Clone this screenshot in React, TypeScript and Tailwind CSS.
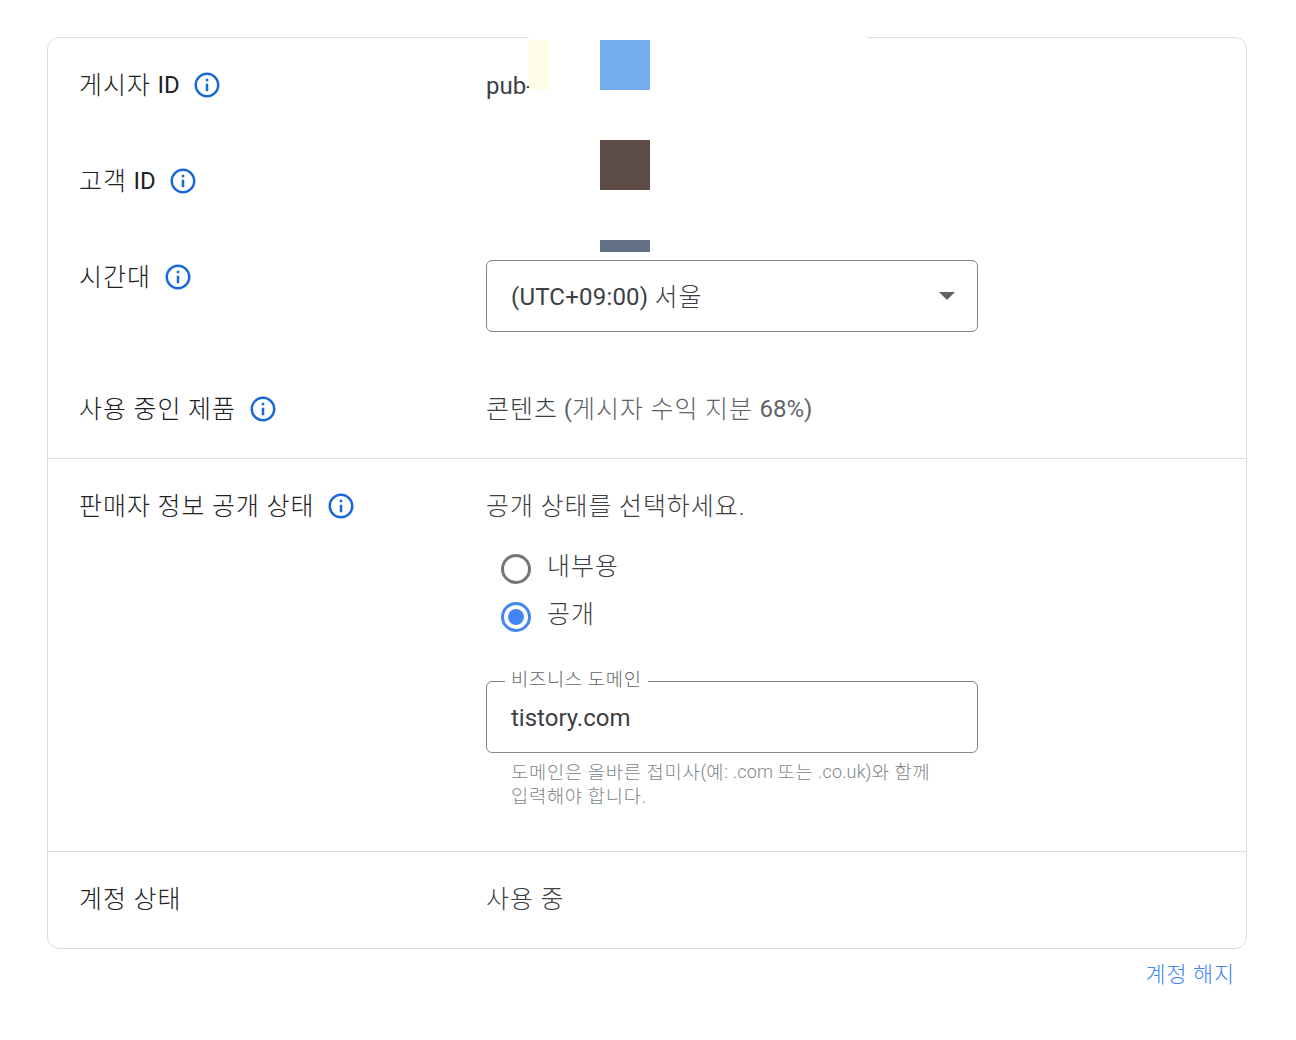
import React from 'react';

const FONT = "font-['Roboto','Noto_Sans_CJK_KR',sans-serif]";

// hangul in the original is larger and wider than Noto, and sits a touch lower
function Ko({ children }: { children: React.ReactNode }) {
  return <span className="text-[1.04em] tracking-[0.04em] [word-spacing:-0.02em] align-[-1px] font-light">{children}</span>;
}

function InfoIcon() {
  return (
    <svg viewBox="0 0 24 24" className="w-[30px] h-[30px] shrink-0 fill-[#1a68d8]">
      <path d="M11 7h2v2h-2zm0 4h2v6h-2zm1-9C6.48 2 2 6.48 2 12s4.48 10 10 10 10-4.48 10-10S17.52 2 12 2zm0 18c-4.41 0-8-3.59-8-8s3.59-8 8-8 8 3.59 8 8-3.59 8-8 8z" />
    </svg>
  );
}

function Label({ text, latin, info = true }: { text: string; latin?: string; info?: boolean }) {
  return (
    <div className="flex items-center gap-3 h-[30px] text-[24px] leading-[30px] text-[#202124]">
      <span><Ko>{text}</Ko>{latin}</span>
      {info && <InfoIcon />}
    </div>
  );
}

function Radio({ label, checked }: { label: string; checked?: boolean }) {
  return (
    <div className="flex items-start h-12 pl-[15px]">
      <span
        className={`mt-[3px] w-[30px] h-[30px] rounded-full border-[3px] flex items-center justify-center ${checked ? 'border-[#4285f4]' : 'border-[#757575]'}`}
      >
        {checked && <span className="w-[16px] h-[16px] rounded-full bg-[#4285f4]" />}
      </span>
      <span className="ml-4 h-[30px] text-[24px] leading-[30px] text-[#3c4043]"><Ko>{label}</Ko></span>
    </div>
  );
}

export default function App() {
  return (
    <div className={`relative min-h-[1040px] bg-white pt-[37px] pl-[47px] ${FONT}`}>
      <div className="w-[1200px] border border-[#dadce0] rounded-[12px]">
        <div className="grid grid-cols-[407px_1fr] content-start pl-[31px] pt-[32px] h-[420px]">
          <div className="h-[96px]"><Label text="게시자 " latin="ID" /></div>
          <div className="h-[96px] text-[24px] leading-[32px] text-[#3c4043]">pub-</div>
          <div className="h-[96px]"><Label text="고객 " latin="ID" /></div>
          <div className="h-[96px]" />
          <div className="h-[132px]"><Label text="시간대" /></div>
          <div className="h-[130px] -mt-[2px]">
            <div className="w-[492px] h-[72px] border border-[#80868b] rounded-[6px] flex items-center justify-between pl-6 pr-[22px] text-[24px] text-[#3c4043]">
              <span className="pt-[4px] tracking-[0.2px]">(UTC+09:00) <Ko>서울</Ko></span>
              <span className="w-0 h-0 border-x-[8px] border-x-transparent border-t-[8px] border-t-[#5f6368]" />
            </div>
          </div>
          <div><Label text="사용 중인 제품" /></div>
          <div className="h-[30px] text-[24px] leading-[30px] text-[#5f6368]">
            <span className="text-[#3c4043]"><Ko>콘텐츠</Ko></span> (<Ko>게시자 수익 지분 </Ko>68%)
          </div>
        </div>

        <div className="grid grid-cols-[407px_1fr] pl-[31px] pt-[32px] h-[393px] border-t border-[#dadce0]">
          <div><Label text="판매자 정보 공개 상태" /></div>
          <div>
            <div className="h-[30px] text-[24px] leading-[30px] text-[#3c4043]"><Ko>공개 상태를 선택하세요.</Ko></div>
            <div className="mt-[30px]">
              <Radio label="내부용" />
              <Radio label="공개" checked />
            </div>
            <div className="relative mt-[34px] w-[492px] h-[72px] border border-[#80868b] rounded-[6px] flex items-center pl-6 pt-[2px] text-[24px] text-[#3c4043]">
              <span className="absolute left-[18px] -top-[15px] bg-white px-[6px] h-[24px] text-[18px] leading-[24px] text-[#5f6368]"><Ko>비즈니스 도메인</Ko></span>
              tistory.com
            </div>
            <div className="pl-[25px] mt-[7px] text-[18px] leading-[24px] font-light tracking-[0.15px] text-[#80868b]">
              <div className="h-[24px]"><Ko>도메인은 올바른 접미사</Ko>(<Ko>예</Ko>: .com <Ko>또는</Ko> .co.uk)<Ko>와 함께</Ko></div>
              <div className="h-[24px]"><Ko>입력해야 합니다.</Ko></div>
            </div>
          </div>
        </div>

        <div className="grid grid-cols-[407px_1fr] pl-[31px] pt-[32px] h-[97px] border-t border-[#dadce0]">
          <div><Label text="계정 상태" info={false} /></div>
          <div className="h-[30px] text-[24px] leading-[30px] text-[#3c4043]"><Ko>사용 중</Ko></div>
        </div>
      </div>

      <div className="w-[1188px] h-[30px] mt-[10px] text-right text-[21px] leading-[30px] text-[#4285f4]"><Ko>계정 해지</Ko></div>

      {/* masked-out publisher and customer ids */}
      <div className="absolute left-[529px] top-[30px] w-[338px] h-[220px] bg-white" />
      <div className="absolute left-[529px] top-[40px] w-[21px] h-[50px] bg-[#ffffe8]" />
      <div className="absolute left-[600px] top-[40px] w-[50px] h-[50px] bg-[#74aeee]" />
      <div className="absolute left-[600px] top-[140px] w-[50px] h-[50px] bg-[#5d4c45]" />
      <div className="absolute left-[600px] top-[240px] w-[50px] h-[12px] bg-[#637088]" />
    </div>
  );
}
